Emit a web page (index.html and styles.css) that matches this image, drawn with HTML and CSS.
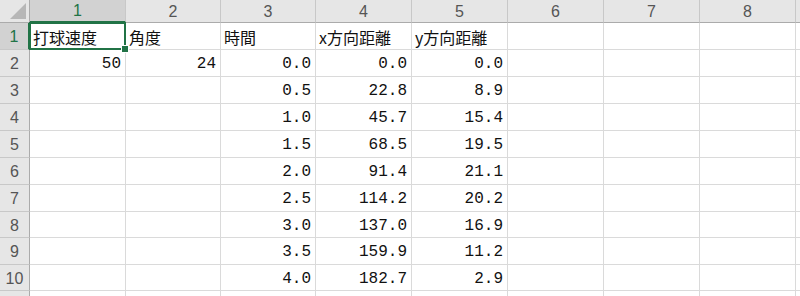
FILE: index.html
```html
<!DOCTYPE html>
<html lang="ja">
<head>
    <meta charset="UTF-8">
    <title>Sheet1</title>
    <link rel="stylesheet" href="styles.css">
</head>
<body>
    <div class="sheet">
        <!-- 列見出し -->
        <div class="corner"><span class="corner-tri"></span></div>
        <div class="col-head active">1</div>
        <div class="col-head">2</div>
        <div class="col-head">3</div>
        <div class="col-head">4</div>
        <div class="col-head">5</div>
        <div class="col-head">6</div>
        <div class="col-head">7</div>
        <div class="col-head">8</div>
        <div class="col-head"></div>

        <div class="row-head active">1</div>
        <div class="cell text selected">打球速度</div>
        <div class="cell text">角度</div>
        <div class="cell text">時間</div>
        <div class="cell text">x方向距離</div>
        <div class="cell text">y方向距離</div>
        <div class="cell"></div><div class="cell"></div><div class="cell"></div><div class="cell"></div>

        <div class="row-head">2</div>
        <div class="cell num">50</div>
        <div class="cell num">24</div>
        <div class="cell num">0.0</div>
        <div class="cell num">0.0</div>
        <div class="cell num">0.0</div>
        <div class="cell"></div><div class="cell"></div><div class="cell"></div><div class="cell"></div>

        <div class="row-head">3</div>
        <div class="cell"></div><div class="cell"></div>
        <div class="cell num">0.5</div>
        <div class="cell num">22.8</div>
        <div class="cell num">8.9</div>
        <div class="cell"></div><div class="cell"></div><div class="cell"></div><div class="cell"></div>

        <div class="row-head">4</div>
        <div class="cell"></div><div class="cell"></div>
        <div class="cell num">1.0</div>
        <div class="cell num">45.7</div>
        <div class="cell num">15.4</div>
        <div class="cell"></div><div class="cell"></div><div class="cell"></div><div class="cell"></div>

        <div class="row-head">5</div>
        <div class="cell"></div><div class="cell"></div>
        <div class="cell num">1.5</div>
        <div class="cell num">68.5</div>
        <div class="cell num">19.5</div>
        <div class="cell"></div><div class="cell"></div><div class="cell"></div><div class="cell"></div>

        <div class="row-head">6</div>
        <div class="cell"></div><div class="cell"></div>
        <div class="cell num">2.0</div>
        <div class="cell num">91.4</div>
        <div class="cell num">21.1</div>
        <div class="cell"></div><div class="cell"></div><div class="cell"></div><div class="cell"></div>

        <div class="row-head">7</div>
        <div class="cell"></div><div class="cell"></div>
        <div class="cell num">2.5</div>
        <div class="cell num">114.2</div>
        <div class="cell num">20.2</div>
        <div class="cell"></div><div class="cell"></div><div class="cell"></div><div class="cell"></div>

        <div class="row-head">8</div>
        <div class="cell"></div><div class="cell"></div>
        <div class="cell num">3.0</div>
        <div class="cell num">137.0</div>
        <div class="cell num">16.9</div>
        <div class="cell"></div><div class="cell"></div><div class="cell"></div><div class="cell"></div>

        <div class="row-head">9</div>
        <div class="cell"></div><div class="cell"></div>
        <div class="cell num">3.5</div>
        <div class="cell num">159.9</div>
        <div class="cell num">11.2</div>
        <div class="cell"></div><div class="cell"></div><div class="cell"></div><div class="cell"></div>

        <div class="row-head">10</div>
        <div class="cell"></div><div class="cell"></div>
        <div class="cell num">4.0</div>
        <div class="cell num">182.7</div>
        <div class="cell num">2.9</div>
        <div class="cell"></div><div class="cell"></div><div class="cell"></div><div class="cell"></div>

        <!-- 11行目（下端で切れている） -->
        <div class="row-head"></div>
        <div class="cell"></div><div class="cell"></div><div class="cell"></div><div class="cell"></div>
        <div class="cell"></div><div class="cell"></div><div class="cell"></div><div class="cell"></div><div class="cell"></div>
    </div>
</body>
</html>
```

FILE: styles.css
```css
* {
    margin: 0;
    padding: 0;
    box-sizing: border-box;
}

body {
    background: #fff;
    width: 800px;
    height: 296px;
    overflow: hidden;
}

.sheet {
    display: grid;
    grid-template-columns: 30px 96px 95px 95px 96px 96px 96px 96px 96px 40px;
    grid-template-rows: 23px 27px 27px 27px 27px 27px 27px 27px 26px 27px 26px 27px;
}

.corner {
    position: relative;
    background: #e6e6e6;
    border-right: 1px solid #ababab;
    border-bottom: 1px solid #ababab;
}

.corner-tri {
    position: absolute;
    right: 3px;
    bottom: 3px;
    width: 0;
    height: 0;
    border-left: 16px solid transparent;
    border-bottom: 16px solid #b7b7b7;
}

.col-head {
    background: #e6e6e6;
    border-right: 1px solid #c8c8c8;
    border-bottom: 1px solid #ababab;
    color: #555;
    font-family: "Liberation Sans", Arial, sans-serif;
    font-size: 16px;
    display: flex;
    align-items: center;
    justify-content: center;
    padding-top: 1px;
}

.row-head {
    background: #e6e6e6;
    border-right: 1px solid #ababab;
    border-bottom: 1px solid #c8c8c8;
    color: #555;
    font-family: "Liberation Sans", Arial, sans-serif;
    font-size: 16px;
    display: flex;
    align-items: center;
    justify-content: center;
    padding-top: 2px;
}

.col-head.active {
    background: #d2d2d2;
    color: #217346;
    border-bottom: 2px solid #217346;
}

.row-head.active {
    background: #d2d2d2;
    color: #217346;
    border-right: 2px solid #217346;
}

.cell {
    border-right: 1px solid #dadada;
    border-bottom: 1px solid #dadada;
    display: flex;
    align-items: center;
    padding: 2px 4px 0 3px;
    color: #111;
    white-space: nowrap;
}

.text {
    font-family: "Noto Sans CJK JP", "Noto Sans CJK SC", sans-serif;
    font-size: 16px;
}

.num {
    justify-content: flex-end;
    font-family: "Liberation Mono", "DejaVu Sans Mono", monospace;
    font-size: 16px;
}

.selected {
    position: relative;
}

.selected::after {
    content: "";
    position: absolute;
    left: -1px;
    top: -1px;
    right: -1px;
    bottom: -1px;
    border: 2px solid #217346;
}

.selected::before {
    content: "";
    position: absolute;
    right: -4px;
    bottom: -4px;
    width: 6px;
    height: 6px;
    background: #217346;
    border: 1px solid #fff;
    z-index: 1;
}
```
